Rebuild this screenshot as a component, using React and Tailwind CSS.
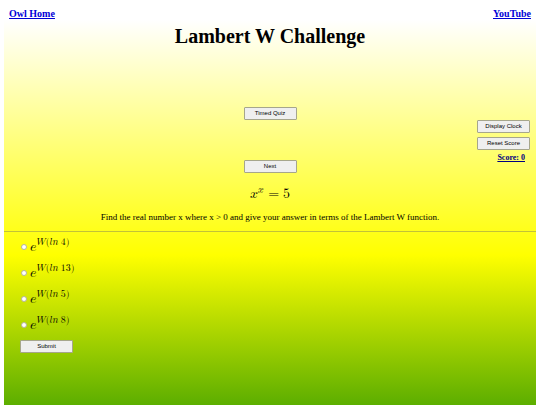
const answers = ["4", "13", "5", "8"];

function QuizButton({ children, type = "button" }) {
  return (
    <button
      type={type}
      className="block h-[13px] w-[53px] rounded-[1px] border border-[#a6a68c] bg-[#efefef] text-center font-['Liberation_Sans',Arial,sans-serif] text-[6px] leading-[11px] text-black"
    >
      {children}
    </button>
  );
}

function Answer({ value }) {
  return (
    <label className="flex h-[26px] items-center">
      <input
        type="radio"
        name="answer"
        value={value}
        className="mr-[3px] mt-1 size-[6px] shrink-0 appearance-none rounded-full border border-[#b5b59a] bg-white checked:bg-[#0075ff]"
      />
      <math className="pb-[2px] font-['Latin_Modern_Math','DejaVu_Math_TeX_Gyre','Liberation_Serif',serif] text-[14px]">
        <msup>
          <mi>e</mi>
          <mrow>
            <mi>W</mi>
            <mo stretchy="false">(</mo>
            <mi>l</mi>
            <mi>n</mi>
            <mspace width="0.25em" />
            <mn>{value}</mn>
            <mo stretchy="false">)</mo>
          </mrow>
        </msup>
      </math>
    </label>
  );
}

export default function App() {
  return (
    <div className="bg-white px-1 font-['Liberation_Serif','Times_New_Roman',serif] text-black">
      <div className="min-h-screen bg-[linear-gradient(to_bottom,#ffffff_20px,#ffff00_255px,#008000_490px)]">
        <nav className="flex justify-between px-[5px] pt-2 text-[10px] font-bold leading-3 text-[#0000d6] underline">
          <a href="#home">Owl Home</a>
          <a href="#youtube">YouTube</a>
        </nav>
        <h1 className="pt-1 text-center text-[20px] font-bold leading-6">Lambert W Challenge</h1>

        <div className="grid grid-cols-[1fr_auto_1fr] pt-[59px]">
          <div className="col-start-2 flex flex-col justify-between">
            <QuizButton>Timed Quiz</QuizButton>
            <QuizButton>Next</QuizButton>
          </div>
          <div className="flex flex-col items-end gap-1 pb-3 pr-[6px] pt-[13px]">
            <QuizButton>Display Clock</QuizButton>
            <QuizButton>Reset Score</QuizButton>
            <p className="pr-[5px] text-[8px] font-bold leading-[7px] text-[#000080] underline">Score: 0</p>
          </div>
        </div>

        <div className="mt-2 flex h-6 items-center justify-center">
          <math className="font-['Latin_Modern_Math','DejaVu_Math_TeX_Gyre','Liberation_Serif',serif] text-[14px]">
            <msup>
              <mi>x</mi>
              <mi>x</mi>
            </msup>
            <mo>=</mo>
            <mn>5</mn>
          </math>
        </div>
        <p className="pt-[6px] text-center text-[9px] leading-3">
          Find the real number x where x &gt; 0 and give your answer in terms of the Lambert W function.
        </p>
        <hr className="mt-2 border-[#c2c238]" />
        <form className="px-4">
          <fieldset>
            <div className="pl-[1px]">
              {answers.map((value) => (
                <Answer key={value} value={value} />
              ))}
            </div>
          </fieldset>
          <div className="pt-1">
            <QuizButton type="submit">Submit</QuizButton>
          </div>
        </form>
      </div>
    </div>
  );
}
